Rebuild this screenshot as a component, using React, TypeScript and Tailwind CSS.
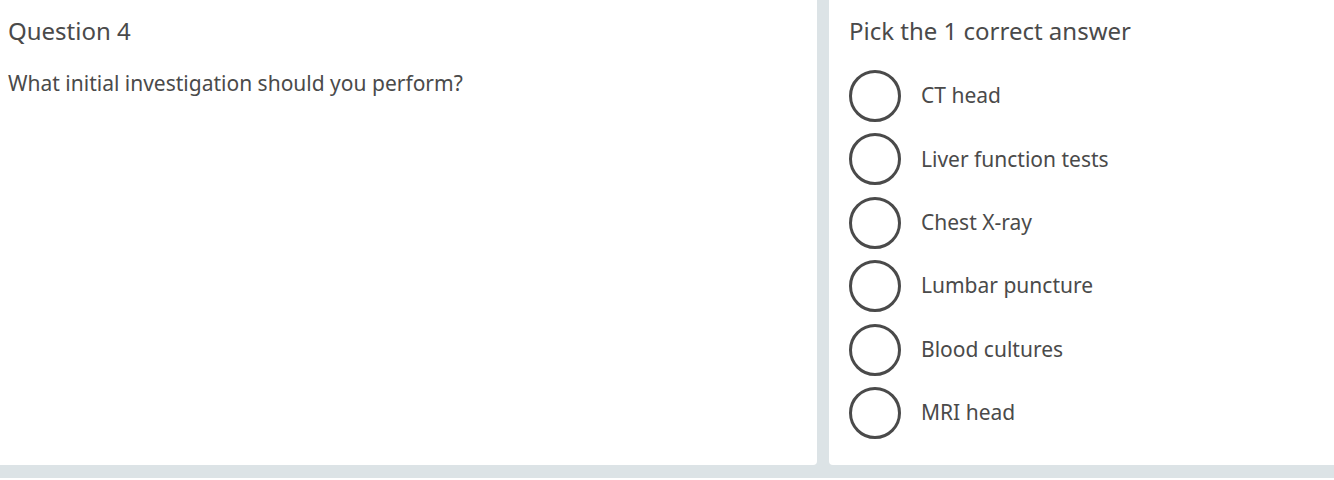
const options = [
  'CT head',
  'Liver function tests',
  'Chest X-ray',
  'Lumbar puncture',
  'Blood cultures',
  'MRI head',
]

export default function App() {
  return (
    <div className="h-[480px] bg-white text-[#4a4a4a]" style={{ fontFamily: '"Noto Sans", "Open Sans", sans-serif' }}>
      <div className="flex gap-3 bg-[#dce3e6] pb-[13px]">
        <div className="w-[817px] h-[465px] bg-white rounded-br px-2 pt-[14px]">
          <h2 className="text-[24px] leading-[34px]">Question 4</h2>
          <p className="mt-[21px] text-[21px] leading-7">What initial investigation should you perform?</p>
        </div>
        <div className="flex-1 bg-white rounded-bl pl-5 pt-[14px]">
          <h2 className="text-[24px] leading-[34px]">Pick the 1 correct answer</h2>
          <div className="mt-[22px] flex flex-col gap-[11.4px]">
            {options.map(o => (
              <label key={o} className="flex items-center gap-[20px] h-[52px] cursor-pointer">
                <span className="w-[52px] h-[52px] rounded-full border-[3px] border-[#4a4a4a] shrink-0" />
                <span className="text-[21px]">{o}</span>
              </label>
            ))}
          </div>
        </div>
      </div>
    </div>
  )
}
